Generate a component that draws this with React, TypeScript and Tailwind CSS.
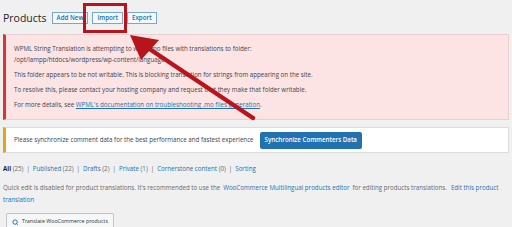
import React from 'react';

const font = { fontFamily: '"Open Sans", "Noto Sans", sans-serif' };

const HeaderButton: React.FC<{ label: string }> = ({ label }) => (
  <span className="inline-flex h-[12px] items-center border border-[#7aa7d0] bg-[#f6f7f7] px-[4px] text-[6.2px] font-semibold leading-none text-[#2271b1]">
    {label}
  </span>
);

const App: React.FC = () => {
  const links = [
    ['All', '(25)'],
    ['Published', '(22)'],
    ['Drafts', '(2)'],
    ['Private', '(1)'],
    ['Cornerstone content', ' (0)'],
    ['Sorting', ''],
  ];

  return (
    <div className="relative h-[227px] w-[512px] overflow-hidden bg-[#f0f0f1] text-[#3c434a]" style={font}>
      {/* Heading */}
      <div className="flex h-[34px] items-center gap-[4px] pl-[3px] pt-[2px]">
        <h1 className="mr-[1px] text-[10.5px] leading-none text-[#1d2327]">Products</h1>
        <HeaderButton label="Add New" />
        <HeaderButton label="Import" />
        <HeaderButton label="Export" />
      </div>

      {/* WPML error notice */}
      <div className="ml-[3px] mr-[3px] border border-l-[3px] border-[#e8d0d0] border-l-[#d63638] bg-[#fde4e4] px-[8px] pb-[9px] pt-[8px] text-[6.2px] leading-[11px]">
        <p>WPML String Translation is attempting to write .mo files with translations to folder:</p>
        <p>/opt/lampp/htdocs/wordpress/wp-content/languages</p>
        <p className="mt-[4px]">This folder appears to be not writable. This is blocking translation for strings from appearing on the site.</p>
        <p className="mt-[4px]">To resolve this, please contact your hosting company and request that they make that folder writable.</p>
        <p className="mt-[4px]">
          For more details, see{' '}
          <span className="text-[#2271b1] underline">WPML's documentation on troubleshooting .mo files generation</span>.
        </p>
      </div>

      {/* Sync notice */}
      <div className="ml-[3px] mr-[3px] mt-[7px] flex h-[26px] items-center gap-[6px] border border-l-[3px] border-[#dcdcde] border-l-[#dba617] bg-white pl-[8px] text-[6.2px]">
        <span>Please synchronize comment data for the best performance and fastest experience</span>
        <span className="inline-flex h-[17px] items-center rounded-[2px] bg-[#2271b1] px-[5px] text-[6.2px] font-semibold text-white">
          Synchronize Commenters Data
        </span>
      </div>

      {/* Status links */}
      <div className="mt-[13px] pl-[3px] text-[6.2px] leading-none text-[#646970]">
        {links.map(([name, count], i) => (
          <span key={name}>
            <span className={i === 0 ? 'font-bold text-[#1d2327]' : 'text-[#2271b1]'}>{name}</span>
            {count && <span> {count}</span>}
            {i < links.length - 1 && <span className="mx-[3px]">|</span>}
          </span>
        ))}
      </div>

      <p className="mt-[10px] pl-[3px] pr-[8px] text-[6.2px] leading-[12px] text-[#646970]">
        Quick edit is disabled for product translations. It's recommended to use the
        <span className="px-[3px] text-[#2271b1]">WooCommerce Multilingual products editor</span>for editing products translations.
        <span className="pl-[4px] text-[#2271b1]">Edit this product translation</span>
      </p>

      <div className="ml-[6px] mt-[7px] flex h-[18px] w-fit items-center gap-[3px] rounded-[2px] border border-[#c3c4c7] bg-[#f6f7f7] px-[5px] text-[5.3px] text-[#2c3338]">
        <svg width="7" height="7" viewBox="0 0 16 16" fill="none" stroke="#2271b1" strokeWidth="2.2">
          <circle cx="7" cy="7" r="5" />
          <path d="M10 10l3 3" />
        </svg>
        Translate WooCommerce products
      </div>

      {/* Annotation overlay */}
      <div className="absolute left-[83px] top-[3px] h-[30px] w-[44px] border-[3.5px] border-[#b8141c]" />
      <svg className="absolute left-0 top-0" width="512" height="227" viewBox="0 0 512 227">
        <line x1="253" y1="118" x2="145" y2="46" stroke="#b8141c" strokeWidth="4.5" strokeLinecap="round" />
        <polygon points="130,35 159,40 141,60" fill="#b8141c" />
      </svg>
    </div>
  );
};

export default App;
